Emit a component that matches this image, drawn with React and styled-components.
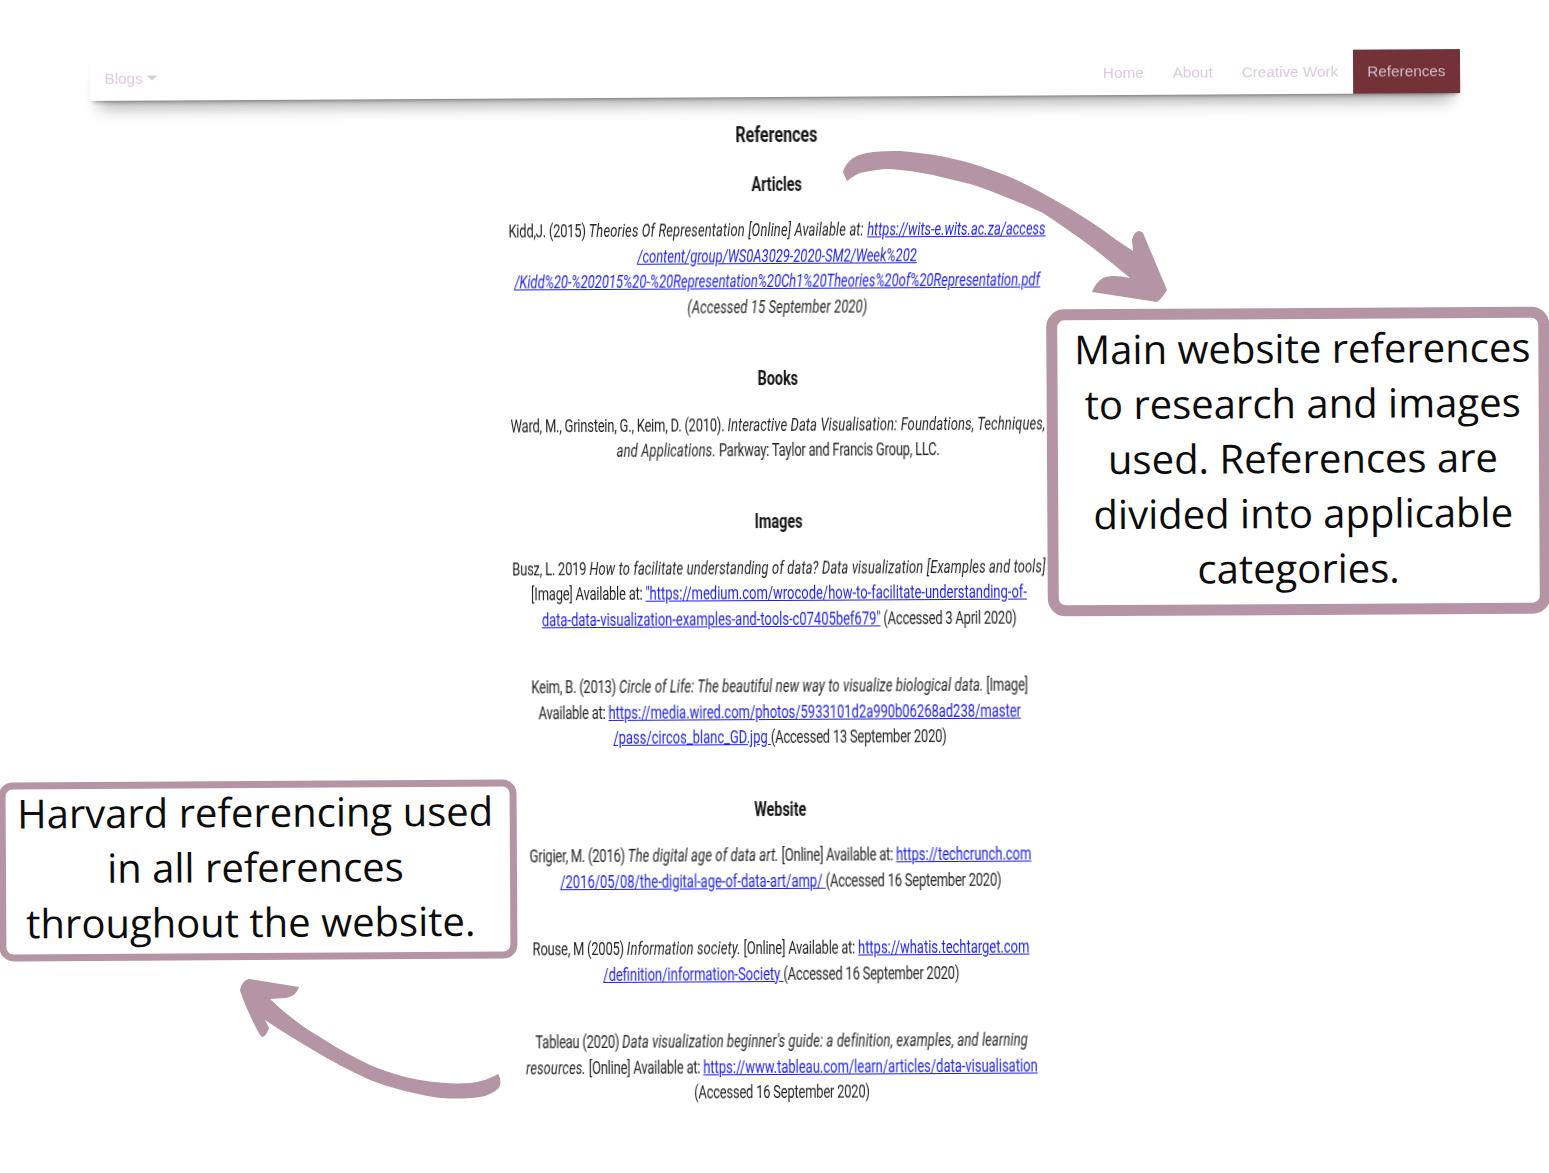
import React from "react";
import styled, { createGlobalStyle } from "styled-components";

const GlobalStyle = createGlobalStyle`
  html, body {
    margin: 0;
    padding: 0;
    background: #fff;
  }
`;

const Canvas = styled.div`
  position: relative;
  width: 1549px;
  height: 1173px;
  overflow: hidden;
  background: #fff;
`;

const Page = styled.div`
  height: 100%;
  padding-top: 53px;
  box-sizing: border-box;
  transform: rotate(-0.33deg);
  filter: blur(0.35px);
`;

const Nav = styled.nav`
  display: flex;
  justify-content: space-between;
  height: 44px;
  margin: 0 86px 0 93px;
  background: #fff;
  box-shadow: 0 4px 4px -3px rgba(0, 0, 0, 0.4), 0 16px 16px -9px rgba(0, 0, 0, 0.32);
  font-family: "Liberation Sans", Arial, sans-serif;
  font-size: 15.3px;
`;

const NavGroup = styled.div`
  display: flex;
  align-items: stretch;
`;

const NavLink = styled.a`
  display: flex;
  align-items: center;
  gap: 4px;
  padding: 0 14.5px ${(props) => (props.$low ? "1px" : "0")};
  color: ${(props) => (props.$active ? "#d3bccd" : "#d9cadb")};
  background: ${(props) => (props.$active ? "#733237" : "transparent")};
  text-decoration: none;
`;

const Caret = styled.span`
  width: 0;
  height: 0;
  border-left: 5px solid transparent;
  border-right: 5px solid transparent;
  border-top: 5px solid #d9cadb;
`;

const Main = styled.main`
  display: flex;
  justify-content: center;
  padding: 24.7px 0 0 8px;
`;

const Column = styled.div`
  flex: none;
  width: 800px;
  transform: scaleX(0.72);
  transform-origin: center top;
  text-align: center;
  font-family: Roboto, "Liberation Sans", sans-serif;
  font-size: 18px;
  line-height: 25.4px;
  color: #1f1f1f;
  white-space: nowrap;
`;

const Title = styled.h1`
  margin: 0 0 24.6px;
  font-size: 22.4px;
  line-height: 25.4px;
  font-weight: 700;
  color: #141414;
`;

const Heading = styled.h2`
  margin: 0 0 20.2px;
  font-size: 20px;
  line-height: 25.4px;
  font-weight: 700;
  color: #141414;
`;

const Section = styled.section`
  margin-bottom: 47px;
`;

const Ref = styled.p`
  margin: 0 0 42.2px;
  &:last-child {
    margin-bottom: 0;
  }
`;

const Line = styled.span`
  display: block;
`;

const Plain = styled.span`
  letter-spacing: -0.3px;
`;

const Italic = styled.em`
  letter-spacing: 0.18px;
`;

const Link = styled.a`
  color: #1c1ce6;
  text-decoration: underline;
`;

const Callout = styled.aside`
  position: absolute;
  box-sizing: border-box;
  display: flex;
  align-items: center;
  justify-content: center;
  background: #fff;
  border-style: solid;
  border-color: #b595a3;
  text-align: center;
  font-family: "Open Sans", sans-serif;
  color: #0c0c0c;
  white-space: nowrap;
  transform: rotate(-0.33deg);
  font-size: 40px;
  line-height: 55px;
`;

const RightCallout = styled(Callout)`
  left: 1047px;
  top: 308px;
  width: 503px;
  height: 307px;
  border-width: 11px;
  border-radius: 18px;
  padding: 0 0 8px 9px;
`;

const LeftCallout = styled(Callout)`
  left: -1px;
  top: 781px;
  width: 518px;
  height: 179px;
  border-width: 7px;
  border-radius: 14px;
  padding: 0 5px 8px 0;
`;

const LastLine = styled.span`
  display: inline-block;
  padding-right: 10px;
`;

const Arrow = styled.svg`
  position: absolute;
  left: 0;
  top: 0;
  pointer-events: none;
`;

const sections = [
  {
    title: "Articles",
    refs: [
      [
        [["Kidd,J. (2015) "], ["Theories Of Representation [Online] Available at: ", "i"], ["https://wits-e.wits.ac.za/access", "il"]],
        [["/content/group/WS0A3029-2020-SM2/Week%202", "il"]],
        [["/Kidd%20-%202015%20-%20Representation%20Ch1%20Theories%20of%20Representation.pdf", "il"]],
        [["(Accessed 15 September 2020)", "i"]],
      ],
    ],
  },
  {
    title: "Books",
    refs: [
      [
        [["Ward, M., Grinstein, G., Keim, D. (2010). "], ["Interactive Data Visualisation: Foundations, Techniques,", "i"]],
        [["and Applications.", "i"], [" Parkway: Taylor and Francis Group, LLC."]],
      ],
    ],
  },
  {
    title: "Images",
    refs: [
      [
        [["Busz, L. 2019 "], ["How to facilitate understanding of data? Data visualization [Examples and tools]", "i"]],
        [["[Image] Available at: "], ["\"https://medium.com/wrocode/how-to-facilitate-understanding-of-", "l"]],
        [["data-data-visualization-examples-and-tools-c07405bef679\"", "l"], [" (Accessed 3 April 2020)"]],
      ],
      [
        [["Keim, B. (2013) "], ["Circle of Life: The beautiful new way to visualize biological data.", "i"], [" [Image]"]],
        [["Available at: "], ["https://media.wired.com/photos/5933101d2a990b06268ad238/master", "l"]],
        [["/pass/circos_blanc_GD.jpg ", "l"], ["(Accessed 13 September 2020)"]],
      ],
    ],
  },
  {
    title: "Website",
    refs: [
      [
        [["Grigier, M. (2016) "], ["The digital age of data art.", "i"], [" [Online] Available at: "], ["https://techcrunch.com", "l"]],
        [["/2016/05/08/the-digital-age-of-data-art/amp/ ", "l"], ["(Accessed 16 September 2020)"]],
      ],
      [
        [["Rouse, M (2005) "], ["Information society.", "i"], [" [Online] Available at: "], ["https://whatis.techtarget.com", "l"]],
        [["/definition/information-Society ", "l"], ["(Accessed 16 September 2020)"]],
      ],
      [
        [["Tableau (2020) "], ["Data visualization beginner's guide: a definition, examples, and learning", "i"]],
        [["resources.", "i"], [" [Online] Available at: "], ["https://www.tableau.com/learn/articles/data-visualisation", "l"]],
        [["(Accessed 16 September 2020)"]],
      ],
    ],
  },
];

const Run = ({ text, kind = "" }) => {
  if (kind === "l") return <Link href="#">{text}</Link>;
  if (kind === "il") return <Link href="#"><em>{text}</em></Link>;
  if (kind === "i") return <Italic>{text}</Italic>;
  return <Plain>{text}</Plain>;
};

export default function App() {
  return (
    <Canvas>
      <GlobalStyle />
      <Page>
        <Nav>
          <NavGroup>
            <NavLink href="#" $low>
              Blogs <Caret />
            </NavLink>
          </NavGroup>
          <NavGroup>
            <NavLink href="#">Home</NavLink>
            <NavLink href="#">About</NavLink>
            <NavLink href="#">Creative Work</NavLink>
            <NavLink href="#" $active>References</NavLink>
          </NavGroup>
        </Nav>
        <Main>
          <Column>
            <Title>References</Title>
            {sections.map((s) => (
              <Section key={s.title}>
                <Heading>{s.title}</Heading>
                {s.refs.map((ref, i) => (
                  <Ref key={i}>
                    {ref.map((line, j) => (
                      <Line key={j}>
                        {line.map(([text, kind], k) => (
                          <Run key={k} text={text} kind={kind} />
                        ))}
                      </Line>
                    ))}
                  </Ref>
                ))}
              </Section>
            ))}
          </Column>
        </Main>
      </Page>

      <Arrow width="1549" height="1173" viewBox="0 0 1549 1173">
        <path
          fill="#b595a3"
          d="M843 172 C845 165 849 161 853 158 C860 154 866 153 873 152 C882 151 890 151 900 151 C915 152 928 154 940 156 C950 158 960 160 970 163 C985 168 998 172 1010 177 C1028 185 1044 194 1060 203 C1074 211 1087 219 1100 228 C1111 236 1122 244 1133 251 L1132 240 C1133 235 1136 231 1139 231 C1141 231 1142 232 1143 233 L1167 290 C1164 295 1161 299 1157 302 L1092 292 C1095 285 1098 281 1103 278 C1111 275 1120 276 1130 278 C1118 268 1106 258 1093 248 C1077 236 1060 224 1043 213 C1027 205 1010 199 993 192 C985 189 978 186 970 184 C958 181 945 178 933 175 C918 172 905 170 890 169 C880 169 870 171 860 173 C855 175 851 178 847 181 Z"
        />
        <path
          fill="#b595a3"
          d="M240 990 C241 985 244 980 249 979 L299 987 C297 993 293 997 285 998 L270 999 C285 1013 302 1027 320 1037 C337 1048 353 1057 370 1065 C387 1072 403 1077 420 1080 C438 1083 454 1084 470 1083 C481 1082 491 1078 498 1074 C501 1078 501 1084 499 1088 C493 1093 487 1096 480 1097 C465 1099 448 1099 433 1097 C412 1093 390 1088 370 1080 C350 1071 331 1061 313 1050 C296 1040 280 1030 265 1020 L269 1028 C268 1032 265 1037 262 1037 C258 1035 241 996 240 990 Z"
        />
      </Arrow>

      <RightCallout>
        <div>
          Main website references
          <br />
          to research and images
          <br />
          used. References are
          <br />
          divided into applicable
          <br />
          <LastLine>categories.</LastLine>
        </div>
      </RightCallout>
      <LeftCallout>
        <div>
          Harvard referencing used
          <br />
          in all references
          <br />
          <LastLine>throughout the website.</LastLine>
        </div>
      </LeftCallout>
    </Canvas>
  );
}
